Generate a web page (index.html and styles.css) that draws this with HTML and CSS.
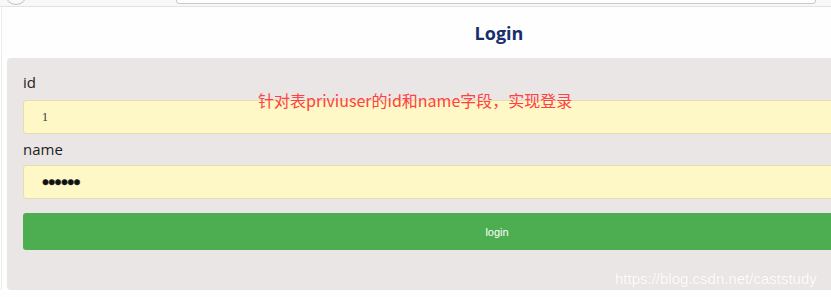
FILE: index.html
```html
<!DOCTYPE html>
<html lang="en">
<head>
    <meta charset="UTF-8">
    <meta name="viewport" content="width=device-width, initial-scale=1.0">
    <title>Login</title>
    <link rel="stylesheet" href="styles.css">
</head>
<body>
    <div class="chrome">
        <span class="chrome-btn"></span>
        <div class="address"></div>
    </div>
    <div class="page">
        <h1>Login</h1>
        <form id="loginForm" class="panel">
            <div class="form-group">
                <label for="id">id</label>
                <input type="text" id="id" name="id" value="1">
            </div>
            <div class="form-group">
                <label for="name">name</label>
                <input type="password" id="name" name="name" value="123456">
            </div>
            <button type="submit">login</button>
        </form>
        <p class="note">针对表priviuser的id和name字段，实现登录</p>
        <span class="watermark">https://blog.csdn.net/caststudy</span>
    </div>
</body>
</html>
```
FILE: styles.css
```css
html, body {
    margin: 0;
    padding: 0;
    background: #fefefe;
    overflow: hidden;
}
body {
    width: 831px;
    height: 297px;
    font-family: "Open Sans", "Noto Sans", sans-serif;
}
.chrome {
    height: 6px;
    background: #f8f8f8;
    border-bottom: 1px solid #e2e2e2;
    display: flex;
    overflow: hidden;
}
.chrome-btn {
    width: 20px;
    height: 20px;
    margin: -17px 0 0 5px;
    border: 1px solid #bdbdbd;
    border-radius: 50%;
    background: #fafafa;
}
.address {
    width: 638px;
    height: 10px;
    margin: -8px 0 0 149px;
    border: 1px solid #c9c9c9;
    border-radius: 3px;
    background: #fff;
}
.page {
    position: relative;
    width: 994px;
    border-left: 1px solid #ececec;
    margin-left: 1px;
}
h1 {
    margin: 0;
    padding-top: 14px;
    height: 37px;
    text-align: center;
    font-size: 18px;
    line-height: 24px;
    font-weight: 700;
    color: #172e6e;
}
.panel {
    margin-left: 5px;
    width: 948px;
    padding: 14px 16px 40px;
    background: #ebe6e6;
    border-radius: 4px;
}
.form-group {
    margin-bottom: 5px;
}
label {
    display: block;
    font-size: 15px;
    line-height: 20px;
    margin-bottom: 8px;
    color: #1e1e1e;
}
.form-group + .form-group label {
    margin-bottom: 6px;
}
input {
    display: block;
    width: 100%;
    height: 34px;
    box-sizing: border-box;
    padding: 0 18px;
    background: #fef7c6;
    border: 1px solid #eadcb2;
    border-radius: 3px;
    font-family: "Liberation Serif", serif;
    font-size: 12px;
    color: #333;
    outline: none;
}
input[type="password"] {
    font-family: "Liberation Sans", sans-serif;
    font-size: 20px;
    letter-spacing: -0.7px;
    color: #111;
    -webkit-text-stroke: 0.5px #111;
}
button {
    display: block;
    width: 100%;
    height: 37px;
    margin-top: 14px;
    background-color: #4cae50;
    color: #fff;
    border: none;
    border-radius: 3px;
    font-family: "Liberation Sans", sans-serif;
    font-size: 11px;
    cursor: pointer;
}
.note {
    position: absolute;
    left: 256px;
    top: 81px;
    margin: 0;
    font-family: "Noto Sans CJK SC", "Noto Sans", sans-serif;
    font-size: 16px;
    line-height: 24px;
    color: #ff4141;
}
.watermark {
    position: absolute;
    left: 613px;
    top: 262px;
    font-family: "Liberation Sans", sans-serif;
    font-size: 15px;
    line-height: 20px;
    color: #fdfcfc;
    text-shadow: 0 0 1px #dcd6d6;
}
```
